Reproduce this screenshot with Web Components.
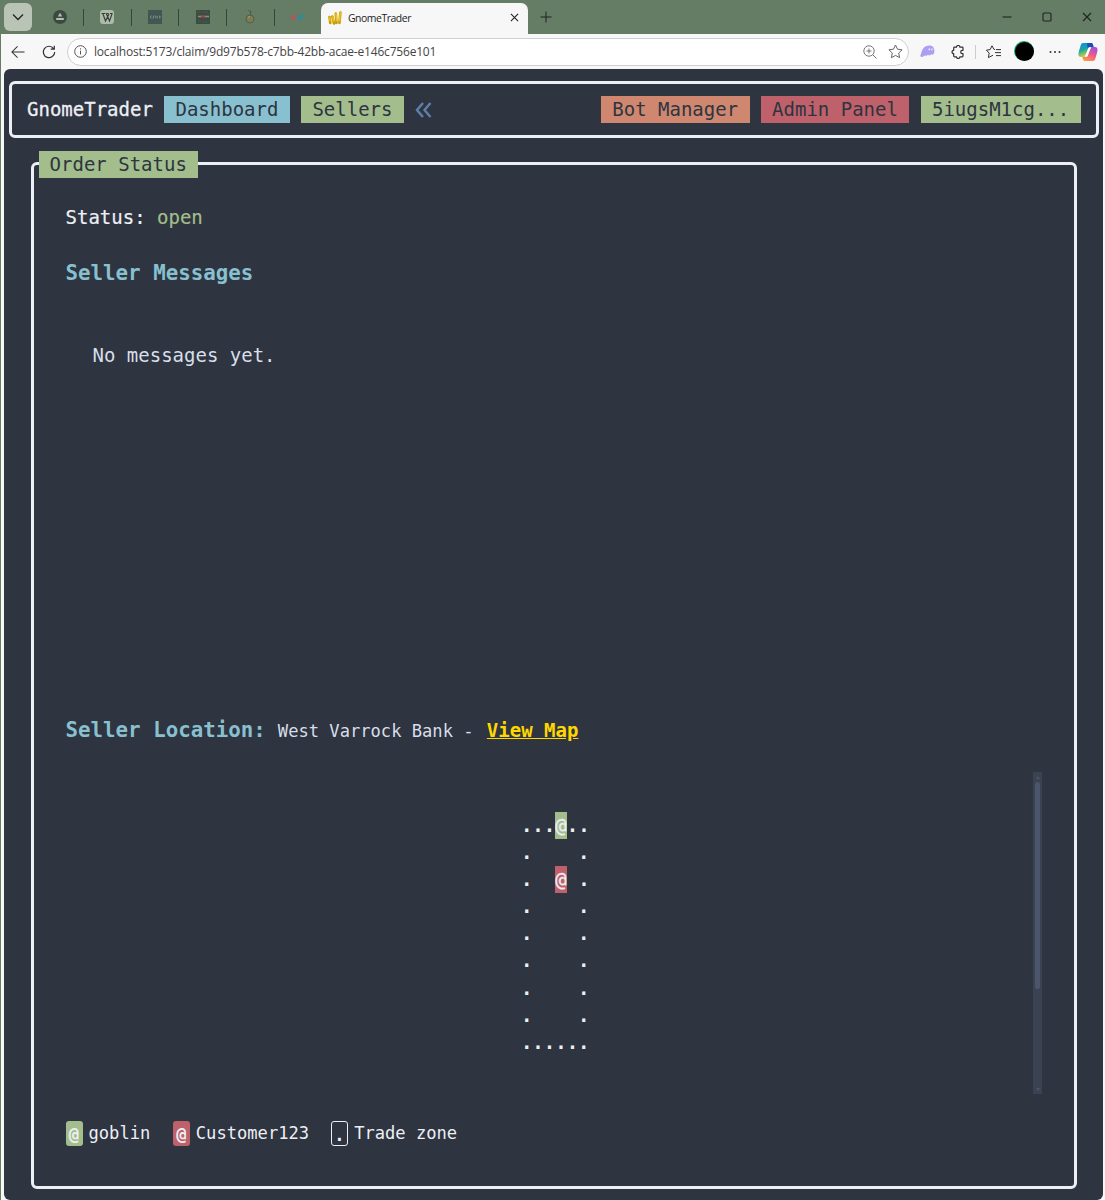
<!DOCTYPE html>
<html lang="en">
<head>
<meta charset="utf-8">
<title>GnomeTrader</title>
<style>
    body {
        margin: 0;
        height: 1200px;
        overflow: hidden;
        background: #f7f7f7;
        font-family: "DejaVu Sans Mono", monospace;
    }
    .brand {
        -webkit-text-stroke: .3px;
    }
</style>
</head>
<body>
<browser-window>
    <tab-strip slot="tabs"></tab-strip>
    <address-bar slot="toolbar" url="localhost:5173/claim/9d97b578-c7bb-42bb-acae-e146c756e101"></address-bar>
    <nav-bar>
        <span class="brand">GnomeTrader</span>
        <tui-badge color="cyan">Dashboard</tui-badge>
        <tui-badge color="green">Sellers</tui-badge>
        <ui-icon name="collapse" width="17" height="16"></ui-icon>
        <tui-badge slot="end" color="orange">Bot Manager</tui-badge>
        <tui-badge slot="end" color="red">Admin Panel</tui-badge>
        <tui-badge slot="end" color="green">5iugsM1cg...</tui-badge>
    </nav-bar>
    <tui-panel>
        <tui-badge slot="title" color="green">Order Status</tui-badge>
        <order-status status="open" place="West Varrock Bank"></order-status>
    </tui-panel>
</browser-window>

<script>
const colors = {
    cyan: "#88c0d0",
    green: "#a3be8c",
    orange: "#d08770",
    red: "#bf616a",
};

const icons = {
    chevron: `<svg viewBox="0 0 12 12" fill="none" stroke="#222" stroke-width="1.3"><path d="M1 3.5l5 5 5-5"/></svg>`,
    back: `<svg viewBox="0 0 15 14" fill="none" stroke="#333" stroke-width="1.1"><path d="M14.5 7H1M7 1L1 7l6 6"/></svg>`,
    reload: `<svg viewBox="0 0 14 14" fill="none" stroke="#333" stroke-width="1.2"><path d="M11.6 3.6A5.7 5.7 0 1 0 12.7 7M12.3 .7v3.5H8.7"/></svg>`,
    info: `<svg viewBox="0 0 13 13" fill="none" stroke="#555"><circle cx="6.5" cy="6.5" r="5.8"/><path d="M6.5 5.7v3.8M6.5 3.3v1.2"/></svg>`,
    zoom: `<svg viewBox="0 0 14 14" fill="none" stroke="#777"><circle cx="6" cy="6" r="5.2"/><path d="M6 3.5v5M3.5 6h5M9.8 9.8l3.7 3.7"/></svg>`,
    star: `<svg viewBox="0 0 15 15" fill="none" stroke="#666" stroke-linejoin="round"><path d="M7.5 1l2 4.2 4.6.6-3.4 3.2.9 4.7-4.1-2.3-4.1 2.3.9-4.7L.9 5.8l4.6-.6z"/></svg>`,
    ghost: `<svg viewBox="0 0 15 13"><path d="M.2 11C1.8 8.8 1.2 1 9 .6c4.2-.2 6 3 5.2 7-.4 1.8-1.5 2.4-2.5 1.8-.8-.5-1.1 1.2-2.3 1-1 0-.9-1.1-1.8-.5-.9.9-1.8 1.4-2.5.4-.9.9-3.6 2.8-4.9.7z" fill="#ab9ff2"/><path d="M9.3 3.6v1.6M12 3.6v1.6" stroke="#fff" stroke-width="1.2"/></svg>`,
    puzzle: `<svg viewBox="0 0 14 14" fill="none" stroke="#333" stroke-width="1.2" stroke-linejoin="round"><path d="M3.5 2.2h2a1.7 1.7 0 0 1 3.4 0h2.3q.8 0 .8.8v2.3h-.6a1.7 1.7 0 0 0 0 3.4h.6V11q0 .8-.8.8H8.9a1.7 1.7 0 0 1-3.4 0h-2q-.8 0-.8-.8V8.7a1.7 1.7 0 0 1 0-3.4V3q0-.8.8-.8z"/></svg>`,
    favorites: `<svg viewBox="0 0 15 14" fill="none" stroke="#333" stroke-linejoin="round"><path d="M9 4.5L7.9 4.3 6 .8 4.1 4.6.4 5.2l2.8 2.9-.8 4.5L7 10.2M10 4.6h5M9 7.6h6M10 10.6h5"/></svg>`,
    more: `<svg viewBox="0 0 12 4" fill="#333"><circle cx="1.5" cy="2" r="1"/><circle cx="6" cy="2" r="1"/><circle cx="10.5" cy="2" r="1"/></svg>`,
    copilot: `<svg viewBox="0 0 20 20"><defs><linearGradient id="a" x2=".4" y2="1"><stop stop-color="#1688ee"/><stop offset=".5" stop-color="#16a6a1"/><stop offset="1" stop-color="#ead332"/></linearGradient><linearGradient id="b" x1=".8" x2=".3" y2="1"><stop stop-color="#9452df"/><stop offset=".5" stop-color="#ed588d"/><stop offset="1" stop-color="#ff9848"/></linearGradient></defs><path d="M5 1h8c2 0 2 2 2.6 4H12c-2 0-2 2-2.6 4L8 13c-.6 1.7-1.3 2-3 2H3c-3 0-2.8-3-2-6l1.5-5C3 2 3.5 1 5 1z" fill="url(#a)"/><path d="M9 1h4c2 0 2 2 2.6 4H12c-1.4 0-2 .5-2.3 1.5z" fill="#194cba"/><path d="M15 19H7c-2 0-2-2-2.6-4H8c2 0 2-2 2.6-4L12 7c.6-1.7 1.3-2 3-2h2c3 0 2.8 3 2 6l-1.5 5c-.5 2-1 3-2.5 3z" fill="url(#b)"/><path d="M10.7 6h2.2L9.4 14H7z" fill="#fff"/></svg>`,
    plus: `<svg viewBox="0 0 13 13" fill="none" stroke="#222" stroke-width="1.1"><path d="M6.5.5v12M.5 6.5h12"/></svg>`,
    close: `<svg viewBox="0 0 10 10" fill="none" stroke="#222" stroke-width="1.2"><path d="M1 1l8 8M9 1L1 9"/></svg>`,
    minimize: `<svg viewBox="0 0 10 10" fill="none" stroke="#222" stroke-width="1.1"><path d="M.5 5h9"/></svg>`,
    maximize: `<svg viewBox="0 0 10 10" fill="none" stroke="#222" stroke-width="1.1"><rect x="1" y="1" width="8" height="8" rx="1"/></svg>`,
    collapse: `<svg viewBox="0 0 17 16" fill="none" stroke="#5e81ac" stroke-width="2.4"><path d="M8 1L2 8l6 7M15.5 1l-6 7 6 7"/></svg>`,
    chart: `<svg viewBox="0 0 14 14" fill="none" stroke="#c79a00" stroke-width="2.6" stroke-linecap="round"><path d="M1.5 6l.8 6M4.3 5.5L6 12.5M7.8 2.5l.7 9.5M12.4 1.5l-1 10.5"/><path d="M1.6 6.5l.6 3M4.5 6l1.2 4M8 2.5l.5 7M12.3 1.5l-.7 8" stroke="#edc51c" stroke-width="1.5"/></svg>`,
    person: `<svg viewBox="0 0 14 14"><circle cx="7" cy="7" r="7" fill="#3c4941"/><path d="M7 2.8L9.2 6.4H4.8z" fill="#b4c1b1"/><path d="M3.2 9h7.6" stroke="#b4c1b1" stroke-width="2"/></svg>`,
    wiki: `<svg viewBox="0 0 14 14"><rect width="14" height="14" rx="3" fill="#aebaaa"/><path d="M1.5 3.5h4M6.2 3.5h2.5M10 3.5h2.6M3 4l2.5 7L9 4M6.5 4l3 7L12 4" fill="none" stroke="#333f34" stroke-width="1.1"/></svg>`,
    code: `<svg viewBox="0 0 14 14"><path fill="#435653" d="M0 0h14v14H0z"/><path d="M3.6 5.8L2.2 7l1.4 1.2M6 5.4L5 8.6M11 5.8L12.4 7 11 8.2" fill="none" stroke="#8fac9d" stroke-width=".8"/><path d="M7.8 5.8v2.6M9.3 5.8v2.6" stroke="#639d65"/></svg>`,
    board: `<svg viewBox="0 0 14 14"><path fill="#3e4d43" d="M0 0h14v14H0z"/><path d="M1 2h4M7 2h5M2 11h3M7 12h5" stroke="#4b5b50"/><path d="M2 6.5h3M9 6.5h4" stroke="#80938c" stroke-width="1.5"/><path d="M5 6.5h4" stroke="#a2473f" stroke-width="2.5"/></svg>`,
    onion: `<svg viewBox="0 0 14 14"><path d="M5.5.5l2.5 1-1 4" fill="none" stroke="#4a5640"/><circle cx="7" cy="9" r="4" fill="#7b7c54" stroke="#565e42"/><path d="M5 7.5l2-1" stroke="#a7a778"/></svg>`,
    slant: `<svg viewBox="0 0 14 14"><path d="M3 4.5h3.8L5.5 10H.2z" fill="#a75b5b"/><path d="M8.5 4.5H14L12 10H7z" fill="#318a94"/></svg>`,
};

function mount(element, html) {
    element.attachShadow({ mode: "open" });
    element.shadowRoot.innerHTML = html;
}

class UiIcon extends HTMLElement {
    connectedCallback() {
        const width = this.getAttribute("width") || 14;
        const height = this.getAttribute("height") || width;
        mount(this, `
      <style>
        :host { display: block; flex: none; width: ${width}px; height: ${height}px; }
        svg { display: block; width: 100%; height: 100%; }
      </style>
      ${icons[this.getAttribute("name")]}`);
    }
}

class BrowserWindow extends HTMLElement {
    connectedCallback() {
        mount(this, `
      <style>
        :host {
          display: flex;
          flex-direction: column;
          height: 1200px;
          box-sizing: border-box;
          background: #f7f7f7;
        }
        .body { display: flex; border-left: 1px solid #667d65; flex: 1; }
        main {
          flex: 1;
          display: flex;
          flex-direction: column;
          box-sizing: border-box;
          min-width: 0;
          margin: 0 2px 0 3px;
          padding: 12px 4px 11px 5px;
          border-radius: 6px;
          background: #2e3440;
          color: #eceff4;
          font-size: 19px;
          line-height: 27px;
        }
      </style>
      <slot name="tabs"></slot>
      <slot name="toolbar"></slot>
      <div class="body"><main><slot></slot></main></div>`);
    }
}

class TabStrip extends HTMLElement {
    connectedCallback() {
        const pinned = ["person", "wiki", "code", "board", "onion", "slant"];
        mount(this, `
      <style>
        :host {
          display: flex;
          align-items: center;
          height: 34px;
          background: #667d65;
          font: 10.4px "Open Sans", sans-serif;
          color: #1b1b1b;
        }
        .menu {
          display: grid;
          place-items: center;
          width: 28px;
          height: 28px;
          margin-left: 4px;
          border-radius: 6px;
          background: #b9c4b7;
        }
        .pinned { display: flex; margin-left: 4.4px; }
        .pinned div {
          display: grid;
          place-items: center;
          box-sizing: border-box;
          width: 47.7px;
          height: 17px;
          border-right: 1px solid #35443a;
        }
        .pinned div:last-child { border-right: 0; width: 45.1px; }
        .tab {
          display: flex;
          align-items: center;
          align-self: flex-end;
          box-sizing: border-box;
          width: 207px;
          height: 31px;
          margin-left: 1px;
          padding: 0 9px 2px 7px;
          border-radius: 7px 7px 0 0;
          background: #f7f7f7;
        }
        .tab span { flex: 1; margin-left: 6px; letter-spacing: -.43px; }
        .add { margin-left: 12px; }
        .controls { display: flex; gap: 30px; margin: 0 13px 0 auto; }
      </style>
      <div class="menu"><ui-icon name="chevron" width="12"></ui-icon></div>
      <div class="pinned">${pinned.map((name) => `<div><ui-icon name="${name}"></ui-icon></div>`).join("")}</div>
      <div class="tab">
        <ui-icon name="chart"></ui-icon><span>GnomeTrader</span><ui-icon name="close" width="9"></ui-icon>
      </div>
      <ui-icon class="add" name="plus" width="12"></ui-icon>
      <div class="controls">
        <ui-icon name="minimize" width="10"></ui-icon>
        <ui-icon name="maximize" width="10"></ui-icon>
        <ui-icon name="close" width="10"></ui-icon>
      </div>`);
    }
}

class AddressBar extends HTMLElement {
    connectedCallback() {
        mount(this, `
      <style>
        :host {
          display: flex;
          align-items: center;
          box-sizing: border-box;
          height: 35px;
          padding: 0 7.5px 0 10px;
          border-left: 1px solid #667d65;
          background: #f7f7f7;
          font: 12px "Open Sans", sans-serif;
          color: #444;
        }
        .field {
          display: flex;
          align-items: center;
          box-sizing: border-box;
          width: 842px;
          height: 28px;
          margin-left: 11px;
          padding: 0 5px 0 6px;
          border: 1px solid #d0d0d0;
          border-radius: 14px;
          background: #fff;
        }
        .field span { flex: 1; margin-left: 7px; letter-spacing: -.19px; }
        .field ui-icon:last-child { margin-left: 11px; }
        .reload { margin-left: 17px; }
        .extras { display: flex; align-items: center; margin-left: auto; }
        .line { width: 1px; height: 14px; margin: 0 10px; background: #ccc; }
        .avatar {
          width: 19px;
          height: 19px;
          margin: 0 15px 0 14px;
          border-radius: 50%;
          background: #000;
          box-shadow: -.5px -.5px 0 .5px #12a878;
        }
      </style>
      <ui-icon name="back" width="14"></ui-icon>
      <ui-icon class="reload" name="reload"></ui-icon>
      <div class="field">
        <ui-icon name="info" width="13"></ui-icon>
        <span>${this.getAttribute("url")}</span>
        <ui-icon name="zoom"></ui-icon>
        <ui-icon name="star" width="15"></ui-icon>
      </div>
      <div class="extras">
        <ui-icon name="ghost" width="15" height="13"></ui-icon>
        <ui-icon name="puzzle" style="margin-left: 16px"></ui-icon>
        <div class="line"></div>
        <ui-icon name="favorites" width="15" height="14"></ui-icon>
        <div class="avatar"></div>
        <ui-icon name="more" width="12" height="4"></ui-icon>
        <ui-icon name="copilot" width="20" style="margin-left: 17px"></ui-icon>
      </div>`);
    }
}

class TuiBadge extends HTMLElement {
    connectedCallback() {
        mount(this, `
      <style>
        :host {
          display: block;
          padding: 0 11.4px 0 11px;
          background: ${colors[this.getAttribute("color")]};
          color: #2e3440;
          white-space: nowrap;
        }
      </style>
      <slot></slot>`);
    }
}

class NavBar extends HTMLElement {
    connectedCallback() {
        mount(this, `
      <style>
        :host {
          display: flex;
          align-items: center;
          justify-content: space-between;
          box-sizing: border-box;
          height: 57px;
          padding: 0 15.4px 0 15px;
          border: 3px solid #eceff4;
          border-radius: 6px;
        }
        div { display: flex; align-items: center; gap: 11.6px; }
      </style>
      <div><slot></slot></div>
      <div><slot name="end"></slot></div>`);
    }
}

class TuiPanel extends HTMLElement {
    connectedCallback() {
        mount(this, `
      <style>
        :host {
          display: block;
          position: relative;
          box-sizing: border-box;
          flex: 1;
          margin: 24px 22px 0;
          padding: 39px 32px 0 31.5px;
          border: 3px solid #eceff4;
          border-radius: 6px;
        }
        .title { position: absolute; left: 4.6px; top: -14.5px; }
      </style>
      <div class="title"><slot name="title"></slot></div>
      <slot></slot>`);
    }
}

class OrderStatus extends HTMLElement {
    connectedCallback() {
        mount(this, `
      <style>
        :host { display: block; }
        p, h2 { margin: 0; }
        h2 { font-size: 20.8px; line-height: 27px; color: #88c0d0; }
        .status { -webkit-text-stroke: .2px; }
        .status span { color: #a3be8c; }
        .messages-title { margin-top: 29px; }
        .messages {
          height: 375px;
          margin-top: 28px;
          padding: 27px;
          box-sizing: border-box;
          color: #d8dee9;
        }
        .location { display: flex; align-items: baseline; gap: 12px; margin-top: 27px; color: #d8dee9; }
        .location p { font-size: 17.12px; }
        a { margin-left: 3px; font-size: 19px; color: #ffd700; font-weight: bold; text-decoration: underline; }
        trade-map { margin-top: 27px; }
        trade-legend { margin-top: 26px; }
      </style>
      <p class="status">Status: <span>${this.getAttribute("status")}</span></p>
      <h2 class="messages-title">Seller Messages</h2>
      <div class="messages">No messages yet.</div>
      <div class="location">
        <h2>Seller Location:</h2>
        <p>${this.getAttribute("place")} - <a>View Map</a></p>
      </div>
      <trade-map></trade-map>
      <trade-legend></trade-legend>`);
    }
}

class TradeMap extends HTMLElement {
    connectedCallback() {
        // S = seller, C = customer
        const rows = [
            "...S..",
            ".    .",
            ".  C .",
            ".    .",
            ".    .",
            ".    .",
            ".    .",
            ".    .",
            "......",
        ];
        const lines = rows.map((row) => {
            const cells = row
                .replace("S", `<b class="seller">@</b>`)
                .replace("C", `<b class="customer">@</b>`);
            return `<div>${cells}</div>`;
        });
        mount(this, `
      <style>
        :host { display: flex; height: 322px; }
        .map {
          flex: 1;
          display: flex;
          flex-direction: column;
          align-items: center;
          margin-top: 40px;
          padding-left: 12px;
          line-height: 27.1px;
          font-weight: bold;
          white-space: pre;
        }
        .map div { height: 27.1px; }
        b {
          display: inline-block;
          height: 27px;
          line-height: 27px;
          vertical-align: top;
          font-weight: normal;
          -webkit-text-stroke: .3px;
        }
        .seller { background: #a3be8c; }
        .customer { background: #bf616a; }
        .scrollbar {
          display: flex;
          flex-direction: column;
          align-items: center;
          width: 9px;
          background: #3b4252;
        }
        .thumb { width: 5px; height: 207px; margin: 3px 0 auto; border-radius: 3px; background: #4c566a; }
        .up, .down { border: 2px solid transparent; }
        .up { margin-top: 4px; border-top: 0; border-bottom: 3px solid #4c566a; }
        .down { margin-bottom: 3px; border-bottom: 0; border-top: 3px solid #4c566a; }
      </style>
      <div class="map">${lines.join("")}</div>
      <div class="scrollbar"><i class="up"></i><div class="thumb"></div><i class="down"></i></div>`);
    }
}

class TradeLegend extends HTMLElement {
    connectedCallback() {
        mount(this, `
      <style>
        :host { display: flex; gap: 22.5px; font-size: 17.12px; }
        div { display: flex; align-items: center; gap: 6px; }
        b {
          box-sizing: border-box;
          width: 17px;
          height: 25px;
          border-radius: 3px;
          line-height: 27px;
          text-align: center;
        }
        .seller { background: #a3be8c; }
        .customer { background: #bf616a; }
        .zone { border: 1.5px solid #eceff4; width: 17.5px; margin-left: -1px; line-height: 27px; }
      </style>
      <div><b class="seller">@</b>goblin</div>
      <div><b class="customer">@</b>Customer123</div>
      <div><b class="zone">.</b>Trade zone</div>`);
    }
}

customElements.define("ui-icon", UiIcon);
customElements.define("browser-window", BrowserWindow);
customElements.define("tab-strip", TabStrip);
customElements.define("address-bar", AddressBar);
customElements.define("tui-badge", TuiBadge);
customElements.define("nav-bar", NavBar);
customElements.define("tui-panel", TuiPanel);
customElements.define("trade-map", TradeMap);
customElements.define("trade-legend", TradeLegend);
customElements.define("order-status", OrderStatus);
</script>
</body>
</html>
